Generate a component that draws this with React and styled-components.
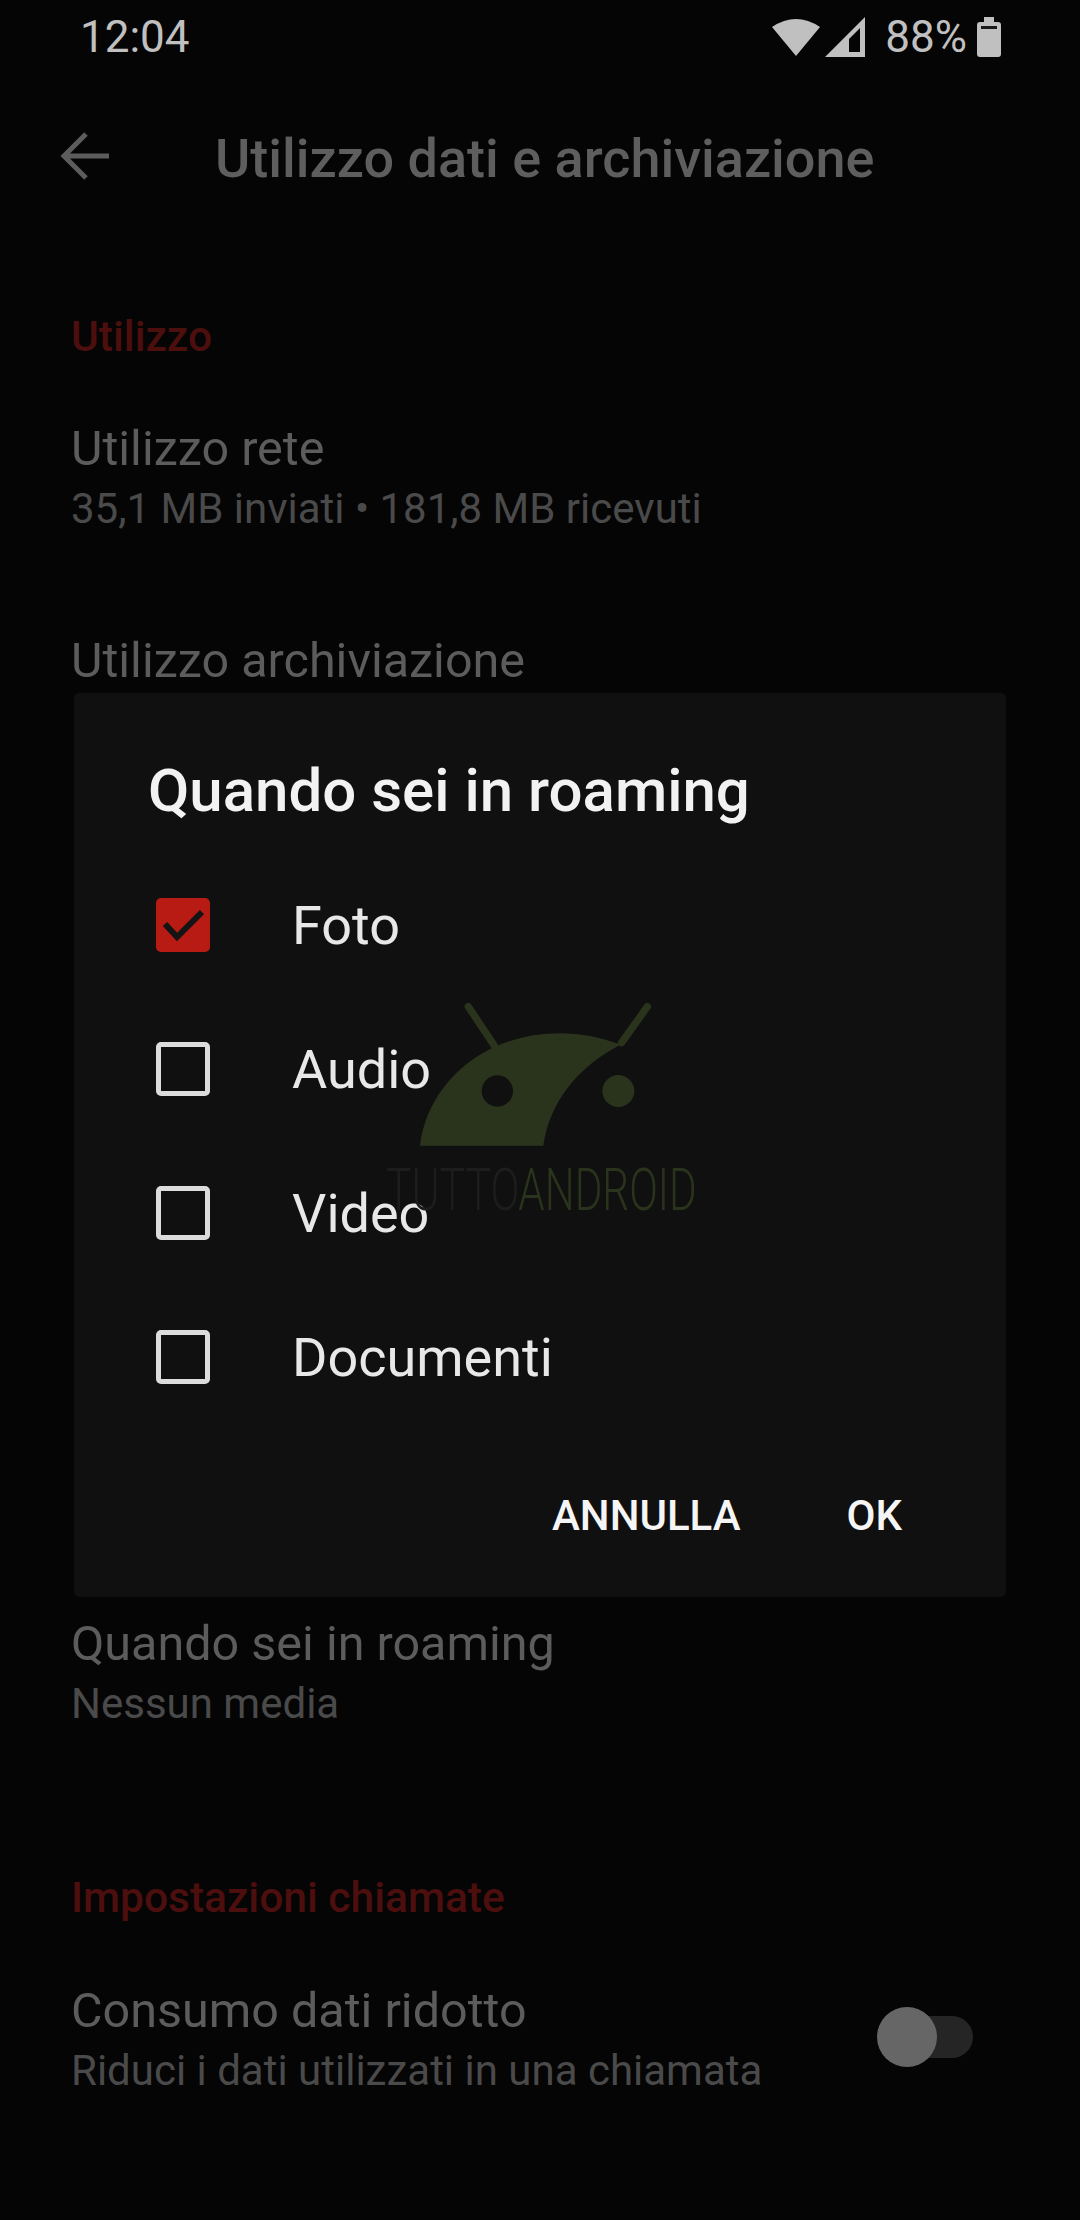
import React from "react";
import styled, { createGlobalStyle } from "styled-components";

const GlobalStyle = createGlobalStyle`
  html, body {
    margin: 0;
    padding: 0;
    background: #050505;
  }
  * {
    box-sizing: border-box;
  }
`;

const Page = styled.div`
  position: relative;
  width: 1080px;
  height: 2220px;
  overflow: hidden;
  background: #050505;
  font-family: Roboto, "Liberation Sans", sans-serif;
`;

const StatusBar = styled.div`
  display: flex;
  align-items: center;
  justify-content: space-between;
  height: 74px;
  padding: 0 79px 0 80px;
  color: #c0c0c0;
  font-size: 44px;
`;

const StatusIcons = styled.div`
  display: flex;
  align-items: center;
  gap: 5px;
`;

const Percent = styled.span`
  margin: 0 5px 0 15px;
`;

const Toolbar = styled.div`
  display: flex;
  align-items: center;
  height: 164px;
  padding-left: 59px;
`;

const ToolbarTitle = styled.div`
  margin-left: 104px;
  padding-top: 4px;
  color: #5e5e5e;
  font-size: 54px;
  font-weight: 500;
`;

const SectionTitle = styled.div`
  height: ${(p) => p.$height}px;
  margin-top: ${(p) => p.$top}px;
  padding: 0 71px;
  line-height: 60px;
  color: #4d0e0e;
  font-size: 42.5px;
  font-weight: 500;
`;

const Row = styled.div`
  display: flex;
  align-items: flex-start;
  justify-content: space-between;
  height: 212px;
  padding: 49px 71px 0;
`;

const RowText = styled.div`
  display: flex;
  flex-direction: column;
  gap: 8px;
`;

const RowTitle = styled.div`
  color: #5c5c5c;
  font-size: 48.5px;
  line-height: 55px;
`;

const RowSub = styled.div`
  color: #4a4a4a;
  font-size: 42px;
  line-height: 50px;
`;

/* rows that the dialog covers completely */
const CoveredRows = styled.div`
  height: 771px;
`;

const Toggle = styled.div`
  position: relative;
  width: 96px;
  height: 42px;
  margin: 33px 36px 0 0;
  border-radius: 21px;
  background: linear-gradient(90deg, transparent 30px, #252525 30px);
`;

const Knob = styled.div`
  position: absolute;
  left: 0;
  top: -9px;
  width: 60px;
  height: 60px;
  border-radius: 50%;
  background: #666666;
`;

const Dialog = styled.div`
  position: absolute;
  left: 74px;
  top: 693px;
  width: 932px;
  height: 904px;
  padding: 0 74px;
  border-radius: 5px;
  background: #101010;
`;

const DialogTitle = styled.div`
  height: 160px;
  padding-top: 65px;
  color: #f2f2f2;
  font-size: 60px;
  line-height: 66px;
  font-weight: 500;
  white-space: nowrap;
`;

const OptionList = styled.div`
  display: flex;
  flex-direction: column;
`;

const Option = styled.div`
  display: flex;
  align-items: center;
  height: 144px;
  padding-left: 8px;
`;

const CheckBox = styled.div`
  display: flex;
  align-items: center;
  justify-content: center;
  width: 54px;
  height: 54px;
  border-radius: 5px;
  border: ${(p) => (p.$checked ? "none" : "5px solid #dcdcdc")};
  background: ${(p) => (p.$checked ? "#b81a14" : "transparent")};
`;

const OptionLabel = styled.div`
  margin-left: 82px;
  color: #e8e8e8;
  font-size: 54px;
`;

const Actions = styled.div`
  display: flex;
  justify-content: flex-end;
  gap: 106px;
  margin-top: 63px;
  padding-right: 30px;
`;

const ActionButton = styled.div`
  color: #f5f5f5;
  font-size: 42px;
  line-height: 48px;
  font-weight: 500;
`;

const Watermark = styled.div`
  position: absolute;
  left: 360px;
  top: 980px;
  width: 360px;
  height: 260px;
  pointer-events: none;
`;

const WifiIcon = () => (
  <svg width="48" height="38" viewBox="0 0 48 38">
    <path d="M0 9 Q24 -7 48 9 L24 38 Z" fill="#c0c0c0" />
  </svg>
);

const SignalIcon = () => (
  <svg width="40" height="40" viewBox="0 0 40 40">
    <path
      fillRule="evenodd"
      d="M0 40 L40 0 L40 40 Z M24 35 L35 35 L35 11 L24 22 Z"
      fill="#c0c0c0"
    />
  </svg>
);

const BatteryIcon = () => (
  <svg width="24" height="40" viewBox="0 0 24 40">
    <path
      d="M7 0 H17 V5 H21 Q24 5 24 8 V37 Q24 40 21 40 H3 Q0 40 0 37 V8 Q0 5 3 5 H7 Z"
      fill="#c0c0c0"
    />
    <rect x="4" y="9" width="16" height="3" fill="#1a1a1a" />
  </svg>
);

const BackIcon = () => (
  <svg width="52" height="50" viewBox="0 0 52 50">
    <path
      d="M50 25 H6 M27 3 L5 25 L27 47"
      fill="none"
      stroke="#5c5c5c"
      strokeWidth="5"
    />
  </svg>
);

const CheckIcon = () => (
  <svg width="42" height="34" viewBox="0 0 42 34">
    <path
      d="M3 16 L15 29 L40 4"
      fill="none"
      stroke="#141414"
      strokeWidth="6"
    />
  </svg>
);

const options = [
  { label: "Foto", checked: true },
  { label: "Audio" },
  { label: "Video" },
  { label: "Documenti" },
];

const App = () => {
  return (
    <Page>
      <GlobalStyle />
      <StatusBar>
        <span>12:04</span>
        <StatusIcons>
          <WifiIcon />
          <SignalIcon />
          <Percent>88%</Percent>
          <BatteryIcon />
        </StatusIcons>
      </StatusBar>
      <Toolbar>
        <BackIcon />
        <ToolbarTitle>Utilizzo dati e archiviazione</ToolbarTitle>
      </Toolbar>

      <SectionTitle $top={69} $height={65}>Utilizzo</SectionTitle>
      <Row>
        <RowText>
          <RowTitle>Utilizzo rete</RowTitle>
          <RowSub>35,1 MB inviati • 181,8 MB ricevuti</RowSub>
        </RowText>
      </Row>
      <Row>
        <RowText>
          <RowTitle>Utilizzo archiviazione</RowTitle>
        </RowText>
      </Row>
      <CoveredRows />
      <Row>
        <RowText>
          <RowTitle>Quando sei in roaming</RowTitle>
          <RowSub>Nessun media</RowSub>
        </RowText>
      </Row>

      <SectionTitle $top={89} $height={66}>Impostazioni chiamate</SectionTitle>
      <Row>
        <RowText>
          <RowTitle>Consumo dati ridotto</RowTitle>
          <RowSub>Riduci i dati utilizzati in una chiamata</RowSub>
        </RowText>
        <Toggle>
          <Knob />
        </Toggle>
      </Row>

      <Dialog>
        <DialogTitle>Quando sei in roaming</DialogTitle>
        <OptionList>
          {options.map((o) => (
            <Option key={o.label}>
              <CheckBox $checked={o.checked}>{o.checked && <CheckIcon />}</CheckBox>
              <OptionLabel>{o.label}</OptionLabel>
            </Option>
          ))}
        </OptionList>
        <Actions>
          <ActionButton>ANNULLA</ActionButton>
          <ActionButton>OK</ActionButton>
        </Actions>
      </Dialog>

      <Watermark>
        <svg width="360" height="260" viewBox="0 0 1080 780">
          <path d="M325 80 L405 200 M862 80 L785 188" stroke="#2a331c" strokeWidth="22" strokeLinecap="round" fill="none" />
          <path d="M180 497 H550 C570 360 660 250 805 182 L770 190 C650 145 510 150 395 205 C280 260 195 370 180 497 Z" fill="#2a331c" />
          <circle cx="412" cy="333" r="47" fill="#101010" />
          <circle cx="775" cy="333" r="48" fill="#2a331c" />
          <text x="78" y="690" fontFamily="Roboto, sans-serif" fontWeight="300" fontSize="180" fill="#1d1d1d" textLength="400" lengthAdjust="spacingAndGlyphs">TUTTO</text>
          <text x="475" y="690" fontFamily="Roboto, sans-serif" fontWeight="300" fontSize="180" fill="#2a331c" textLength="535" lengthAdjust="spacingAndGlyphs">ANDROID</text>
        </svg>
      </Watermark>
    </Page>
  );
};

export default App;
